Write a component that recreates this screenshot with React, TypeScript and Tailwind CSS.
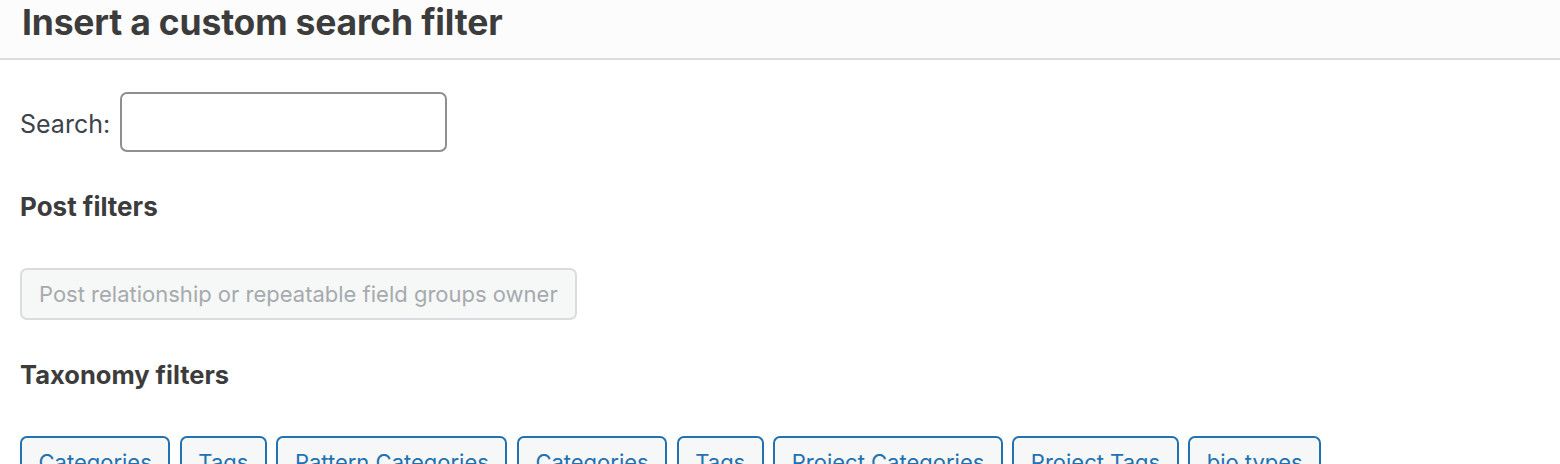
import React from 'react';

const taxonomies = [
  'Categories',
  'Tags',
  'Pattern Categories',
  'Categories',
  'Tags',
  'Project Categories',
  'Project Tags',
  'bio types',
];

export default function App() {
  return (
    <div
      className="w-[1560px] h-[464px] overflow-hidden bg-white text-[#3c434a]"
      style={{ fontFamily: 'Inter, "Noto Sans", sans-serif' }}
    >
      <div className="h-[60px] bg-[#fcfcfc] border-b-2 border-[#dcdcde] flex items-center pl-[22px]">
        <h1 className="text-[35.5px] font-bold text-[#3c3c3c] leading-none -mt-[12px] tracking-[-0.2px]">
          Insert a custom search filter
        </h1>
      </div>

      <div className="px-[20px]">
        <div className="flex items-center gap-[10px] mt-[32px]">
          <label className="text-[25px] text-[#3c434a] pt-[6px]">Search:</label>
          <input
            type="text"
            className="w-[327px] h-[60px] border-2 border-[#8c8f94] rounded-[7px] bg-white outline-none"
          />
        </div>

        <h3 className="text-[26px] font-bold text-[#3c3c3c] mt-[40px] leading-[30px]">Post filters</h3>

        <button
          disabled
          className="mt-[46px] h-[52px] px-[17px] border-2 border-[#dcdcde] rounded-[7px] bg-[#f6f7f7] text-[#a7aaad] text-[22px]"
        >
          Post relationship or repeatable field groups owner
        </button>

        <h3 className="text-[25.5px] font-bold text-[#3c3c3c] mt-[40px] leading-[30px]">Taxonomy filters</h3>

        <div className="flex gap-[9.5px] mt-[46px]">
          {taxonomies.map((t, i) => (
            <button
              key={i}
              className="h-[52px] px-[16.5px] border-2 border-[#2271b1] rounded-[7px] bg-[#f6f7f7] text-[#2271b1] text-[22px] whitespace-nowrap"
            >
              {t}
            </button>
          ))}
        </div>
      </div>
    </div>
  );
}
